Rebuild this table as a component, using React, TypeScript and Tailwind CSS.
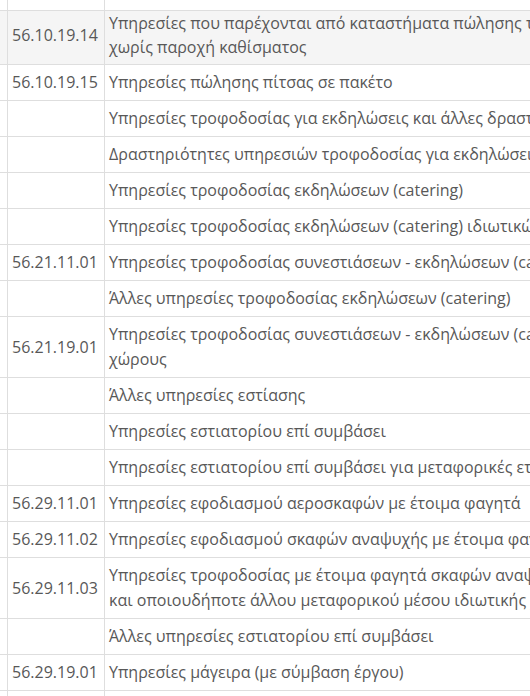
type Row = { code: string; lines: string[]; h: number; hover?: boolean };

const rows: Row[] = [
  {
    code: "56.10.19.14",
    lines: [
      "Υπηρεσίες που παρέχονται από καταστήματα πώλησης τροφίμων σε πακέτο",
      "χωρίς παροχή καθίσματος",
    ],
    h: 54,
    hover: true,
  },
  { code: "56.10.19.15", lines: ["Υπηρεσίες πώλησης πίτσας σε πακέτο"], h: 36 },
  { code: "", lines: ["Υπηρεσίες τροφοδοσίας για εκδηλώσεις και άλλες δραστηριότητες εστίασης"], h: 36 },
  { code: "", lines: ["Δραστηριότητες υπηρεσιών τροφοδοσίας για εκδηλώσεις"], h: 36 },
  { code: "", lines: ["Υπηρεσίες τροφοδοσίας εκδηλώσεων (catering)"], h: 36 },
  { code: "", lines: ["Υπηρεσίες τροφοδοσίας εκδηλώσεων (catering) ιδιωτικών χώρων"], h: 36 },
  { code: "56.21.11.01", lines: ["Υπηρεσίες τροφοδοσίας συνεστιάσεων - εκδηλώσεων (catering)"], h: 36 },
  { code: "", lines: ["Άλλες υπηρεσίες τροφοδοσίας εκδηλώσεων (catering)"], h: 36 },
  {
    code: "56.21.19.01",
    lines: [
      "Υπηρεσίες τροφοδοσίας συνεστιάσεων - εκδηλώσεων (catering) σε ιδιωτικούς",
      "χώρους",
    ],
    h: 61,
  },
  { code: "", lines: ["Άλλες υπηρεσίες εστίασης"], h: 36 },
  { code: "", lines: ["Υπηρεσίες εστιατορίου επί συμβάσει"], h: 36 },
  { code: "", lines: ["Υπηρεσίες εστιατορίου επί συμβάσει για μεταφορικές εταιρείες"], h: 36 },
  { code: "56.29.11.01", lines: ["Υπηρεσίες εφοδιασμού αεροσκαφών με έτοιμα φαγητά"], h: 36 },
  { code: "56.29.11.02", lines: ["Υπηρεσίες εφοδιασμού σκαφών αναψυχής με έτοιμα φαγητά"], h: 36 },
  {
    code: "56.29.11.03",
    lines: [
      "Υπηρεσίες τροφοδοσίας με έτοιμα φαγητά σκαφών αναψυχής, τρένων",
      "και οποιουδήποτε άλλου μεταφορικού μέσου ιδιωτικής χρήσης",
    ],
    h: 61,
  },
  { code: "", lines: ["Άλλες υπηρεσίες εστιατορίου επί συμβάσει"], h: 36 },
  { code: "56.29.19.01", lines: ["Υπηρεσίες μάγειρα (με σύμβαση έργου)"], h: 36 },
];

export default function App() {
  return (
    <div
      className="w-[530px] h-[696px] overflow-hidden bg-white text-[16px] text-[#585858]"
      style={{ fontFamily: '"Open Sans", "Noto Sans", sans-serif' }}
    >
      <div className="w-[1000px]">
        {/* row cut off at the top */}
        <div className="flex h-[11px] border-b border-[#dedede]">
          <div className="w-[8px] border-r border-[#dedede]" />
          <div className="w-[97px] border-r border-[#dedede]" />
          <div className="flex-1" />
        </div>

        {rows.map((r, i) => (
          <div
            key={i}
            className={`flex border-b border-[#dedede] ${r.hover ? "bg-[#f5f5f5]" : "bg-white"}`}
            style={{ height: r.h }}
          >
            <div className="w-[8px] shrink-0 border-r border-[#dedede]" />
            <div
              className={`w-[97px] shrink-0 border-r border-[#dedede] pl-[4px] flex ${
                r.hover ? "items-start" : "items-center"
              }`}
            >
              <span className={r.hover ? "leading-[48px]" : "leading-[25px]"}>{r.code}</span>
            </div>
            <div
              className={`flex-1 pl-[4px] flex flex-col whitespace-nowrap ${
                r.hover ? "justify-start leading-[24px]" : "justify-center leading-[25px]"
              }`}
            >
              {r.lines.map((l, j) => (
                <div key={j}>{l}</div>
              ))}
            </div>
          </div>
        ))}

        {/* row cut off at the bottom */}
        <div className="flex h-[20px]">
          <div className="w-[8px] border-r border-[#dedede]" />
          <div className="w-[97px] border-r border-[#dedede]" />
          <div className="flex-1" />
        </div>
      </div>
    </div>
  );
}
